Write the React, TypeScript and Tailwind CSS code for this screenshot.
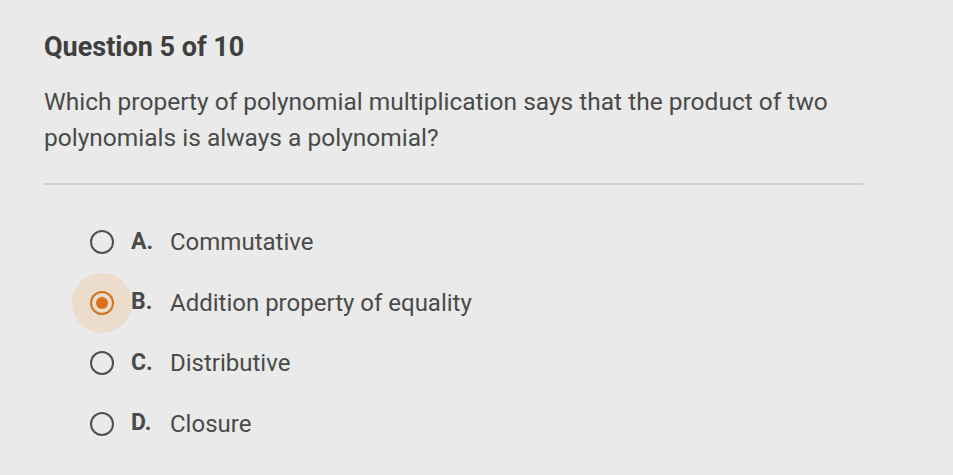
import React from "react";

const OPTIONS = [
  { letter: "A.", text: "Commutative" },
  { letter: "B.", text: "Addition property of equality", selected: true },
  { letter: "C.", text: "Distributive" },
  { letter: "D.", text: "Closure" },
];

function Radio({ selected }: { selected?: boolean }) {
  if (selected) {
    return (
      <div className="relative w-[24px] h-[24px] shrink-0">
        <div className="absolute left-[-18px] top-[-18px] w-[60px] h-[60px] rounded-full bg-[#ebdccb]" />
        <div className="absolute inset-0 rounded-full border-[2.5px] border-[#d8701c] flex items-center justify-center">
          <div className="w-[12px] h-[12px] rounded-full bg-[#d8701c]" />
        </div>
      </div>
    );
  }
  return <div className="w-[24px] h-[24px] shrink-0 rounded-full border-[2.5px] border-[#505050]" />;
}

export default function App() {
  return (
    <div
      className="w-[953px] h-[475px] overflow-hidden bg-[#e9eae9] text-[#474747]"
      style={{ fontFamily: "Roboto, 'Noto Sans', sans-serif" }}
    >
      <div className="pl-[44px] pr-[90px] pt-[29px]">
        <h1 className="text-[27px] font-bold leading-[36px] text-[#3f3f3f]">Question 5 of 10</h1>
        <p className="mt-[19px] text-[24.5px] leading-[36px] text-[#4a4a4a]">
          Which property of polynomial multiplication says that the product of two
          <br />
          polynomials is always a polynomial?
        </p>
        <div className="mt-[27px] h-[2px] bg-[#cfd0cf]" />
        <div className="mt-[44px] pl-[46px] flex flex-col gap-[34.5px]">
          {OPTIONS.map((o) => (
            <div key={o.letter} className="flex items-center h-[26px]">
              <Radio selected={o.selected} />
              <span className="ml-[17px] w-[39px] text-[23px] font-bold text-[#4a4a4a]">{o.letter}</span>
              <span className="text-[24px] text-[#4a4a4a]">{o.text}</span>
            </div>
          ))}
        </div>
      </div>
    </div>
  );
}
